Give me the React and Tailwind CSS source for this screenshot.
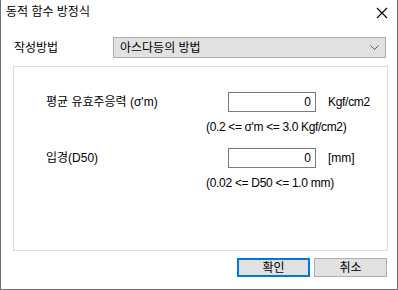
import React from "react";

const font = { fontFamily: '"Liberation Sans", "Noto Sans CJK KR", sans-serif' };

export default function App() {
  return (
    <div className="w-[398px] h-[290px] bg-white border-l border-r border-b border-[#707070] text-[12px] text-black flex flex-col relative" style={font}>
      <div className="h-[24px] flex items-center justify-between pl-[5px] pr-[9px]">
        <span className="leading-none">동적 함수 방정식</span>
        <svg width="12" height="12" viewBox="0 0 12 12" className="mt-[1px]">
          <path d="M1 1 L11 11 M11 1 L1 11" stroke="#000" strokeWidth="1.1" />
        </svg>
      </div>
      <div className="flex items-center mt-[13px] pl-[13px]">
        <span className="w-[99px]">작성방법</span>
        <div className="w-[273px] h-[21px] bg-[#e1e1e1] border border-[#adadad] flex items-center justify-between pl-[6px] pr-[6px]">
          <span>아스다등의 방법</span>
          <svg width="9" height="6" viewBox="0 0 9 6">
            <path d="M0.5 0.5 L4.5 4.5 L8.5 0.5" stroke="#555" fill="none" strokeWidth="1" />
          </svg>
        </div>
      </div>
      <div className="ml-[12px] mt-[8px] w-[375px] h-[185px] border border-[#dcdcdc] flex flex-col">
        <div className="flex items-center mt-[25px]">
          <span className="pl-[32px] w-[214px]">평균 유효주응력 (σ'm)</span>
          <div className="w-[88px] h-[20px] border border-[#7a7a7a] flex items-center justify-end pr-[4px]">0</div>
          <span className="ml-[12px] tracking-[-0.3px]">Kgf/cm2</span>
        </div>
        <div className="pl-[192px] mt-[6px] tracking-[-0.35px]">(0.2 &lt;= σ'm &lt;= 3.0 Kgf/cm2)</div>
        <div className="flex items-center mt-[12px]">
          <span className="pl-[32px] w-[214px]">입경(D50)</span>
          <div className="w-[88px] h-[20px] border border-[#7a7a7a] flex items-center justify-end pr-[4px]">0</div>
          <span className="ml-[12px]">[mm]</span>
        </div>
        <div className="pl-[192px] mt-[6px] tracking-[-0.3px]">(0.02 &lt;= D50 &lt;= 1.0 mm)</div>
      </div>
      <div className="flex justify-end gap-[4px] mt-[7px] pr-[10px]">
        <div className="w-[73px] h-[19px] bg-[#e1e1e1] border-2 border-[#0078d7] flex items-center justify-center">확인</div>
        <div className="w-[73px] h-[19px] bg-[#e1e1e1] border border-[#adadad] flex items-center justify-center">취소</div>
      </div>
    </div>
  );
}
